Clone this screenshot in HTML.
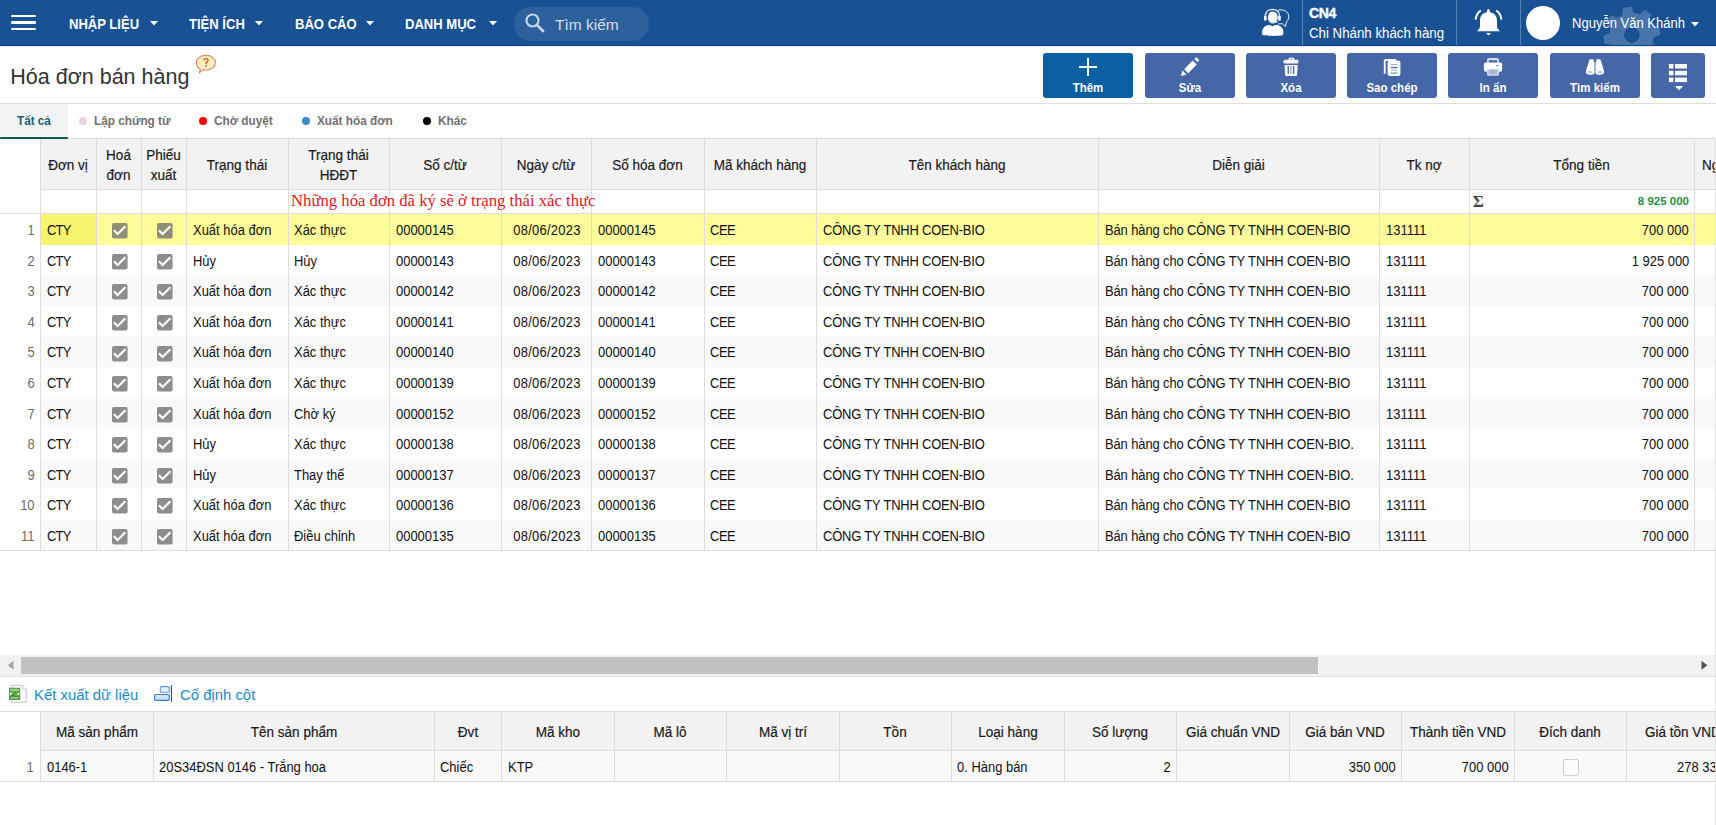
<!DOCTYPE html>
<html><head><meta charset="utf-8"><title>Hóa đơn bán hàng</title>
<style>
html,body{margin:0;padding:0;}
body{width:1716px;height:825px;position:relative;overflow:hidden;background:#fff;font-family:"Liberation Sans", sans-serif;}
.r{position:absolute;}
.t{position:absolute;white-space:nowrap;}
</style></head><body>
<div class="r" style="left:0px;top:0px;width:1716px;height:45px;background:#195294;"></div>
<div class="r" style="left:0px;top:45px;width:1716px;height:1px;background:#0e4585;"></div>
<div class="r" style="left:0px;top:46px;width:1716px;height:1px;background:#ebe9e7;"></div>
<div class="r" style="left:11px;top:15px;width:25px;height:2px;background:#fff;border-radius:1px"></div>
<div class="r" style="left:11px;top:21.25px;width:25px;height:2.5px;background:#fff;border-radius:1px"></div>
<div class="r" style="left:11px;top:28px;width:25px;height:2px;background:#fff;border-radius:1px"></div>
<div class="t" style="left:69px;top:15.71px;font-size:14.5px;line-height:17.4px;font-weight:bold;color:#fff;transform:scaleX(0.9);transform-origin:left 0;">NHẬP LIỆU</div>
<svg class="r" style="left:149.6px;top:21px;" width="8" height="5" viewBox="0 0 8 5"><path d="M0 0 L8 0 L4 4.5 Z" fill="#fff"/></svg>
<div class="t" style="left:188.5px;top:15.71px;font-size:14.5px;line-height:17.4px;font-weight:bold;color:#fff;transform:scaleX(0.9);transform-origin:left 0;">TIỆN ÍCH</div>
<svg class="r" style="left:255px;top:21px;" width="8" height="5" viewBox="0 0 8 5"><path d="M0 0 L8 0 L4 4.5 Z" fill="#fff"/></svg>
<div class="t" style="left:295px;top:15.71px;font-size:14.5px;line-height:17.4px;font-weight:bold;color:#fff;transform:scaleX(0.9);transform-origin:left 0;">BÁO CÁO</div>
<svg class="r" style="left:365.6px;top:21px;" width="8" height="5" viewBox="0 0 8 5"><path d="M0 0 L8 0 L4 4.5 Z" fill="#fff"/></svg>
<div class="t" style="left:405px;top:15.71px;font-size:14.5px;line-height:17.4px;font-weight:bold;color:#fff;transform:scaleX(0.9);transform-origin:left 0;">DANH MỤC</div>
<svg class="r" style="left:489px;top:21px;" width="8" height="5" viewBox="0 0 8 5"><path d="M0 0 L8 0 L4 4.5 Z" fill="#fff"/></svg>
<div class="r" style="left:514px;top:7px;width:135px;height:34px;background:rgba(255,255,255,0.09);border-radius:17px"></div>
<svg class="r" style="left:524px;top:12px;" width="22" height="22" viewBox="0 0 22 22"><circle cx="8.5" cy="8.5" r="6" stroke="#c9d6e6" stroke-width="2.2" fill="none"/><path d="M13 13 L19 19" stroke="#c9d6e6" stroke-width="2.8" stroke-linecap="round"/></svg>
<div class="t" style="left:555px;top:15.98px;font-size:15.5px;line-height:18.6px;font-weight:normal;color:#d5dfeb;">Tìm kiếm</div>
<svg class="r" style="left:1255px;top:2px;" width="40" height="40" viewBox="0 0 40 40">
<path d="M7.5 33 C6.5 30 7 25.5 11.5 23.5 C13.5 22.8 15.5 23 17.5 24.5 C19.5 23 21.5 22.8 24 23.5 C28.5 25.5 29 30 28 33 C25 34.2 10.5 34.2 7.5 33 Z" fill="#fff"/>
<ellipse cx="17.8" cy="15.5" rx="4.9" ry="6" fill="#fff"/>
<path d="M10.3 15 C10.3 9.5 13.5 7.4 17.6 7.4 C21.8 7.4 24.6 9.5 24.6 15" stroke="#dfe7f1" stroke-width="1.4" fill="none"/>
<rect x="9" y="13.8" width="2.6" height="5" rx="1.2" fill="#fff"/>
<rect x="23.2" y="13.8" width="2.6" height="5" rx="1.2" fill="#fff"/>
<path d="M16.8 20.3 C19 20.8 21 20.6 23 19.5" stroke="#cfdbe9" stroke-width="1.2" fill="none"/>
<path d="M22.5 8.5 C27 6.5 34 9 33.8 15 C33.7 18 31.5 19.5 31.2 21 L30.5 24.6 L27.5 21.8 C26 21.5 24.5 21.8 23 22" stroke="#e8eef5" stroke-width="1" fill="none"/>
</svg>
<div class="r" style="left:1302px;top:0px;width:1px;height:45px;background:rgba(255,255,255,0.28);"></div>
<div class="t" style="left:1309px;top:5.17px;font-size:14px;line-height:16.8px;font-weight:900;color:#fff;letter-spacing:-0.3px;-webkit-text-stroke:0.4px #fff;">CN4</div>
<div class="t" style="left:1309px;top:25.17px;font-size:14px;line-height:16.8px;font-weight:normal;color:#fff;transform:scaleX(0.948);transform-origin:left 0;">Chi Nhánh khách hàng</div>
<div class="r" style="left:1456px;top:0px;width:1px;height:45px;background:rgba(255,255,255,0.28);"></div>
<svg class="r" style="left:1468px;top:2px;" width="40" height="40" viewBox="0 0 40 40">
<path d="M20.4 7 C21.3 7 21.8 8.2 22 10.3 C27 11.2 29 14.5 29 19 L29 25.5 L31.8 29.2 L9.2 29.2 L12 25.5 L12 19 C12 14.5 14 11.2 18.8 10.3 C19 8.2 19.5 7 20.4 7 Z" fill="#fff"/>
<path d="M18 31 L23 31 L20.5 33.6 Z" fill="#fff"/>
<path d="M12.8 8.5 C9.8 10.5 8 13.8 7.6 17.6" stroke="#fff" stroke-width="2" fill="none"/>
<path d="M28.2 8.5 C31.2 10.5 33 13.8 33.4 17.6" stroke="#fff" stroke-width="2" fill="none"/>
</svg>
<div class="r" style="left:1520px;top:0px;width:1px;height:45px;background:rgba(255,255,255,0.28);"></div>
<svg class="r" style="left:1590px;top:0px;" width="90" height="45" viewBox="0 0 90 45"><path d="M62.17 26.02 L68.95 26.12 L70.39 34.55 L64.03 36.90 L62.62 43.08 L67.35 47.95 L62.41 54.93 L56.25 52.09 L50.88 55.47 L50.78 62.25 L42.35 63.69 L40.00 57.33 L33.82 55.92 L28.95 60.65 L21.97 55.71 L24.81 49.55 L21.43 44.18 L14.65 44.08 L13.21 35.65 L19.57 33.30 L20.98 27.12 L16.25 22.25 L21.19 15.27 L27.35 18.11 L32.72 14.73 L32.82 7.95 L41.25 6.51 L43.60 12.87 L49.78 14.28 L54.65 9.55 L61.63 14.49 L58.79 20.65 Z M49.599999999999994 35.1 A7.8 7.8 0 1 0 34.0 35.1 A7.8 7.8 0 1 0 49.599999999999994 35.1 Z" fill="rgba(255,255,255,0.2)" fill-rule="evenodd"/></svg>
<div class="r" style="left:1526px;top:5.5px;width:34px;height:34px;border-radius:50%;background:#fff"></div>
<div class="t" style="left:1571.5px;top:15.17px;font-size:14px;line-height:16.8px;font-weight:normal;color:#fff;transform:scaleX(0.93);transform-origin:left 0;">Nguyễn Văn Khánh</div>
<svg class="r" style="left:1691px;top:21.5px;" width="8" height="5" viewBox="0 0 8 5"><path d="M0 0 L8 0 L4 4.5 Z" fill="#fff"/></svg>
<div class="t" style="left:10.3px;top:64.99px;font-size:21.5px;line-height:25.8px;font-weight:normal;color:#333;">Hóa đơn bán hàng</div>
<svg class="r" style="left:190px;top:50px;" width="32" height="28" viewBox="0 0 32 28">
<defs><linearGradient id="hg" x1="0" y1="0" x2="0" y2="1"><stop offset="0" stop-color="#ffe9a8"/><stop offset="1" stop-color="#fff6cf"/></linearGradient></defs>
<path d="M15.9 5.2 C21.3 5.2 25.4 8.5 25.4 12.6 C25.4 16.8 21.3 20 15.9 20 C14.8 20 13.8 19.9 12.9 19.6 L9.6 22.6 L10.2 18.9 C7.8 17.6 6.4 15.3 6.4 12.6 C6.4 8.5 10.5 5.2 15.9 5.2 Z" fill="url(#hg)" stroke="#e2825e" stroke-width="1.1"/>
<path d="M13.3 10.3 C13.3 8.6 14.5 7.9 16 7.9 C17.6 7.9 18.7 8.8 18.7 10.2 C18.7 12 16.6 12.2 16.6 14.2 L15.3 14.2 C15.2 11.6 17.2 11.4 17.2 10.3 C17.2 9.6 16.7 9.2 16 9.2 C15.2 9.2 14.8 9.7 14.8 10.4 Z" fill="#dc5b3a"/>
<rect x="15.2" y="15.3" width="1.6" height="1.6" fill="#dc5b3a"/>
</svg>
<div class="r" style="left:1043px;top:53px;width:90px;height:45px;background:#0b5fa3;border-radius:3px"></div>
<div class="t" style="left:1043.0px;width:90px;text-align:center;top:80.97px;font-size:12.5px;line-height:15.0px;font-weight:bold;color:#fff;transform:scaleX(0.92);transform-origin:center 0;">Thêm</div>
<div class="r" style="left:1145px;top:53px;width:90px;height:45px;background:#4667a7;border-radius:3px"></div>
<div class="t" style="left:1145.0px;width:90px;text-align:center;top:80.97px;font-size:12.5px;line-height:15.0px;font-weight:bold;color:#fff;transform:scaleX(0.92);transform-origin:center 0;">Sửa</div>
<div class="r" style="left:1246px;top:53px;width:90px;height:45px;background:#4667a7;border-radius:3px"></div>
<div class="t" style="left:1246.0px;width:90px;text-align:center;top:80.97px;font-size:12.5px;line-height:15.0px;font-weight:bold;color:#fff;transform:scaleX(0.92);transform-origin:center 0;">Xóa</div>
<div class="r" style="left:1347px;top:53px;width:90px;height:45px;background:#4667a7;border-radius:3px"></div>
<div class="t" style="left:1347.0px;width:90px;text-align:center;top:80.97px;font-size:12.5px;line-height:15.0px;font-weight:bold;color:#fff;transform:scaleX(0.92);transform-origin:center 0;">Sao chép</div>
<div class="r" style="left:1448px;top:53px;width:90px;height:45px;background:#4667a7;border-radius:3px"></div>
<div class="t" style="left:1448.0px;width:90px;text-align:center;top:80.97px;font-size:12.5px;line-height:15.0px;font-weight:bold;color:#fff;transform:scaleX(0.92);transform-origin:center 0;">In ấn</div>
<div class="r" style="left:1550px;top:53px;width:90px;height:45px;background:#4667a7;border-radius:3px"></div>
<div class="t" style="left:1550.0px;width:90px;text-align:center;top:80.97px;font-size:12.5px;line-height:15.0px;font-weight:bold;color:#fff;transform:scaleX(0.92);transform-origin:center 0;">Tìm kiếm</div>
<div class="r" style="left:1651px;top:53px;width:54px;height:45px;background:#4667a7;border-radius:3px"></div>
<div class="r" style="left:1087px;top:58.2px;width:2.2px;height:18px;background:#fff;"></div>
<div class="r" style="left:1079px;top:66.1px;width:18px;height:2.2px;background:#fff;"></div>
<svg class="r" style="left:1170px;top:52px;" width="40" height="30" viewBox="0 0 40 30">
<path d="M11 24 L12.4 18.6 L16.6 22.6 Z" fill="#fff"/>
<path d="M14.2 17.2 L22.6 8.6 L26.8 12.6 L18.2 21.2 Z" fill="#fff"/>
<path d="M24.2 7 L25.6 5.8 C26.2 5.4 26.8 5.4 27.3 5.9 L28.8 7.4 C29.2 7.9 29.2 8.5 28.7 9 L27.6 10.2 Z" fill="#fff"/>
</svg>
<svg class="r" style="left:1271px;top:52px;" width="40" height="30" viewBox="0 0 40 30">
<path d="M17.6 7.9 L17.6 6.8 C17.6 6.2 18 5.8 18.7 5.8 L22.2 5.8 C22.9 5.8 23.3 6.2 23.3 6.8 L23.3 7.9 L21.9 7.9 L21.9 7.2 L19 7.2 L19 7.9 Z" fill="#fff"/>
<rect x="12.4" y="7.8" width="15.1" height="3.8" rx="1.6" fill="#fff"/>
<path d="M13.6 12.9 L26.7 12.9 L26 23 C26 23.6 25.5 24 25 24 L15.2 24 C14.7 24 14.3 23.6 14.2 23 Z" fill="#fff"/>
<rect x="16.6" y="13.9" width="1.3" height="8" fill="#4667a7"/>
<rect x="19.3" y="13.9" width="1.3" height="8" fill="#8fa4cb"/>
<rect x="22" y="13.9" width="1.3" height="8" fill="#4667a7"/>
</svg>
<svg class="r" style="left:1372px;top:52px;" width="40" height="30" viewBox="0 0 40 30">
<path d="M24 7 L14 7 C12.6 7 11.8 7.8 11.8 9.2 L11.8 21.8 L13.6 21.8 L13.6 9.4 C13.6 8.9 14 8.7 14.4 8.7 L24.2 8.7 Z" fill="#fff"/>
<rect x="15.6" y="8.6" width="12.8" height="15.4" rx="2.2" fill="#fff"/>
<rect x="18.9" y="12" width="6.6" height="1.2" fill="#9fb1d3"/>
<rect x="18.9" y="15" width="6.6" height="1.2" fill="#4667a7"/>
<rect x="18.9" y="17.6" width="6.6" height="1.2" fill="#a9b9d8"/>
<rect x="18.9" y="20.6" width="6.6" height="1.2" fill="#6a84b8"/>
</svg>
<svg class="r" style="left:1473px;top:52px;" width="40" height="30" viewBox="0 0 40 30">
<path d="M14 10.8 L14 8 C14 6.8 14.8 6 16 6 L24 6 C25.2 6 26 6.8 26 8 L26 10.8 L24.2 10.8 L24.2 8.2 L15.8 8.2 L15.8 10.8 Z" fill="#d5ddec"/>
<rect x="10.9" y="10.5" width="18.2" height="9.3" rx="1.8" fill="#fff"/>
<ellipse cx="24.3" cy="13.6" rx="1.2" ry="0.6" fill="#4667a7"/>
<path d="M14 17.2 L26 17.2 L26 22.2 C26 23.2 25.4 23.8 24.4 23.8 L15.6 23.8 C14.6 23.8 14 23.2 14 22.2 Z" fill="#c9d3e7"/>
<rect x="15.9" y="17.6" width="8.2" height="4.4" fill="#a8b8d8"/>
</svg>
<svg class="r" style="left:1575px;top:52px;" width="40" height="30" viewBox="0 0 40 30">
<path d="M14.5 7.6 C15.5 7.2 17.5 7.2 18.6 7.6 L19.6 19 L19.6 21 C18.8 22.5 17 22.8 15 22.8 C12.5 22.8 10.8 21.5 10.9 19.8 C11 18.8 11.4 17.5 12 15.5 Z" fill="#fff"/>
<path d="M25.5 7.6 C24.5 7.2 22.5 7.2 21.4 7.6 L20.4 19 L20.4 21 C21.2 22.5 23 22.8 25 22.8 C27.5 22.8 29.2 21.5 29.1 19.8 C29 18.8 28.6 17.5 28 15.5 Z" fill="#fff"/>
<rect x="19.4" y="10" width="1.2" height="7" fill="#d3dcec"/>
<ellipse cx="15" cy="20.2" rx="2.6" ry="1.1" fill="#b9c7e0"/>
<ellipse cx="25" cy="20.2" rx="2.6" ry="1.1" fill="#b9c7e0"/>
</svg>
<svg class="r" style="left:1658px;top:52px;" width="40" height="46" viewBox="0 0 40 46">
<rect x="10.9" y="12" width="4.5" height="4.5" fill="#fff"/><rect x="17" y="12" width="12" height="4.5" fill="#fff"/>
<rect x="10.9" y="18.8" width="4.5" height="4.5" fill="#fff"/><rect x="17" y="18.8" width="12" height="4.5" fill="#fff"/>
<rect x="10.9" y="25.6" width="4.5" height="4.5" fill="#fff"/><rect x="17" y="25.6" width="12" height="4.5" fill="#fff"/>
<path d="M17 34 L25 34 L21 38.3 Z" fill="#fff"/>
</svg>
<div class="r" style="left:0px;top:103px;width:1716px;height:1px;background:#dddddd;"></div>
<div class="r" style="left:0px;top:104px;width:68px;height:32px;background:#f1f3f5;"></div>
<div class="r" style="left:0px;top:138px;width:1716px;height:1px;background:#dddddd;"></div>
<div class="r" style="left:0px;top:137px;width:68px;height:2px;background:#075b4f;border-radius:1px"></div>
<div class="t" style="left:16.7px;top:113.40px;font-size:13px;line-height:15.6px;font-weight:bold;color:#1d6070;transform:scaleX(0.9);transform-origin:left 0;">Tất cả</div>
<div class="r" style="left:79px;top:117.3px;width:8.2px;height:8.2px;border-radius:50%;background:#ead3df"></div>
<div class="t" style="left:94px;top:113.40px;font-size:13px;line-height:15.6px;font-weight:bold;color:#707070;transform:scaleX(0.905);transform-origin:left 0;">Lập chứng từ</div>
<div class="r" style="left:199px;top:117.3px;width:8.2px;height:8.2px;border-radius:50%;background:#ff0000"></div>
<div class="t" style="left:214px;top:113.40px;font-size:13px;line-height:15.6px;font-weight:bold;color:#707070;transform:scaleX(0.905);transform-origin:left 0;">Chờ duyệt</div>
<div class="r" style="left:301.7px;top:117.3px;width:8.2px;height:8.2px;border-radius:50%;background:#3d87cb"></div>
<div class="t" style="left:316.7px;top:113.40px;font-size:13px;line-height:15.6px;font-weight:bold;color:#707070;transform:scaleX(0.905);transform-origin:left 0;">Xuất hóa đơn</div>
<div class="r" style="left:423px;top:117.3px;width:8.2px;height:8.2px;border-radius:50%;background:#000"></div>
<div class="t" style="left:438px;top:113.40px;font-size:13px;line-height:15.6px;font-weight:bold;color:#707070;transform:scaleX(0.905);transform-origin:left 0;">Khác</div>
<div class="r" style="left:41px;top:139px;width:1674px;height:50px;background:#f2f2f2;"></div>
<div class="r" style="left:41px;top:214px;width:1674px;height:31px;background:#fefc9a;"></div>
<div class="r" style="left:41px;top:214px;width:55px;height:31px;background:#f7f56e;"></div>
<div class="r" style="left:41px;top:275px;width:1674px;height:31px;background:#f9f9f9;"></div>
<div class="r" style="left:41px;top:336px;width:1674px;height:31px;background:#f9f9f9;"></div>
<div class="r" style="left:41px;top:397px;width:1674px;height:31px;background:#f9f9f9;"></div>
<div class="r" style="left:41px;top:459px;width:1674px;height:30px;background:#f9f9f9;"></div>
<div class="r" style="left:41px;top:520px;width:1674px;height:30px;background:#f9f9f9;"></div>
<div class="r" style="left:40px;top:189px;width:1675px;height:1px;background:#dddddd;"></div>
<div class="r" style="left:0px;top:213px;width:1715px;height:1px;background:#dddddd;"></div>
<div class="r" style="left:0px;top:550px;width:1715px;height:1px;background:#dddddd;"></div>
<div class="r" style="left:40px;top:139px;width:1px;height:411px;background:#dddddd;"></div>
<div class="r" style="left:96px;top:139px;width:1px;height:411px;background:#dddddd;"></div>
<div class="r" style="left:141px;top:139px;width:1px;height:411px;background:#dddddd;"></div>
<div class="r" style="left:186px;top:139px;width:1px;height:411px;background:#dddddd;"></div>
<div class="r" style="left:288px;top:139px;width:1px;height:411px;background:#dddddd;"></div>
<div class="r" style="left:389px;top:139px;width:1px;height:411px;background:#dddddd;"></div>
<div class="r" style="left:501px;top:139px;width:1px;height:411px;background:#dddddd;"></div>
<div class="r" style="left:591px;top:139px;width:1px;height:411px;background:#dddddd;"></div>
<div class="r" style="left:704px;top:139px;width:1px;height:411px;background:#dddddd;"></div>
<div class="r" style="left:816px;top:139px;width:1px;height:411px;background:#dddddd;"></div>
<div class="r" style="left:1098px;top:139px;width:1px;height:411px;background:#dddddd;"></div>
<div class="r" style="left:1379px;top:139px;width:1px;height:411px;background:#dddddd;"></div>
<div class="r" style="left:1469px;top:139px;width:1px;height:411px;background:#dddddd;"></div>
<div class="r" style="left:1694px;top:139px;width:1px;height:411px;background:#dddddd;"></div>
<div class="r" style="left:1715px;top:138px;width:1px;height:687px;background:#e2e2e2;"></div>
<div class="t" style="left:20.0px;width:96px;text-align:center;top:156.87px;font-size:14px;line-height:16.8px;font-weight:normal;color:#1a1a1a;transform:scaleX(0.965);transform-origin:center 0;-webkit-text-stroke:0.2px #1a1a1a;">Đơn vị</div>
<div class="t" style="left:76.0px;width:85px;text-align:center;top:147.37px;font-size:14px;line-height:16.8px;font-weight:normal;color:#1a1a1a;transform:scaleX(0.965);transform-origin:center 0;-webkit-text-stroke:0.2px #1a1a1a;">Hoá</div>
<div class="t" style="left:76.0px;width:85px;text-align:center;top:166.77px;font-size:14px;line-height:16.8px;font-weight:normal;color:#1a1a1a;transform:scaleX(0.965);transform-origin:center 0;-webkit-text-stroke:0.2px #1a1a1a;">đơn</div>
<div class="t" style="left:121.0px;width:85px;text-align:center;top:147.37px;font-size:14px;line-height:16.8px;font-weight:normal;color:#1a1a1a;transform:scaleX(0.965);transform-origin:center 0;-webkit-text-stroke:0.2px #1a1a1a;">Phiếu</div>
<div class="t" style="left:121.0px;width:85px;text-align:center;top:166.77px;font-size:14px;line-height:16.8px;font-weight:normal;color:#1a1a1a;transform:scaleX(0.965);transform-origin:center 0;-webkit-text-stroke:0.2px #1a1a1a;">xuất</div>
<div class="t" style="left:166.0px;width:142px;text-align:center;top:156.87px;font-size:14px;line-height:16.8px;font-weight:normal;color:#1a1a1a;transform:scaleX(0.965);transform-origin:center 0;-webkit-text-stroke:0.2px #1a1a1a;">Trạng thái</div>
<div class="t" style="left:268.0px;width:141px;text-align:center;top:147.37px;font-size:14px;line-height:16.8px;font-weight:normal;color:#1a1a1a;transform:scaleX(0.965);transform-origin:center 0;-webkit-text-stroke:0.2px #1a1a1a;">Trạng thái</div>
<div class="t" style="left:268.0px;width:141px;text-align:center;top:166.77px;font-size:14px;line-height:16.8px;font-weight:normal;color:#1a1a1a;transform:scaleX(0.965);transform-origin:center 0;-webkit-text-stroke:0.2px #1a1a1a;">HĐĐT</div>
<div class="t" style="left:369.0px;width:152px;text-align:center;top:156.87px;font-size:14px;line-height:16.8px;font-weight:normal;color:#1a1a1a;transform:scaleX(0.965);transform-origin:center 0;-webkit-text-stroke:0.2px #1a1a1a;">Số c/từ</div>
<div class="t" style="left:481.0px;width:130px;text-align:center;top:156.87px;font-size:14px;line-height:16.8px;font-weight:normal;color:#1a1a1a;transform:scaleX(0.965);transform-origin:center 0;-webkit-text-stroke:0.2px #1a1a1a;">Ngày c/từ</div>
<div class="t" style="left:571.0px;width:153px;text-align:center;top:156.87px;font-size:14px;line-height:16.8px;font-weight:normal;color:#1a1a1a;transform:scaleX(0.965);transform-origin:center 0;-webkit-text-stroke:0.2px #1a1a1a;">Số hóa đơn</div>
<div class="t" style="left:684.0px;width:152px;text-align:center;top:156.87px;font-size:14px;line-height:16.8px;font-weight:normal;color:#1a1a1a;transform:scaleX(0.965);transform-origin:center 0;-webkit-text-stroke:0.2px #1a1a1a;">Mã khách hàng</div>
<div class="t" style="left:796.0px;width:322px;text-align:center;top:156.87px;font-size:14px;line-height:16.8px;font-weight:normal;color:#1a1a1a;transform:scaleX(0.965);transform-origin:center 0;-webkit-text-stroke:0.2px #1a1a1a;">Tên khách hàng</div>
<div class="t" style="left:1078.0px;width:321px;text-align:center;top:156.87px;font-size:14px;line-height:16.8px;font-weight:normal;color:#1a1a1a;transform:scaleX(0.965);transform-origin:center 0;-webkit-text-stroke:0.2px #1a1a1a;">Diễn giải</div>
<div class="t" style="left:1359.0px;width:130px;text-align:center;top:156.87px;font-size:14px;line-height:16.8px;font-weight:normal;color:#1a1a1a;transform:scaleX(0.965);transform-origin:center 0;-webkit-text-stroke:0.2px #1a1a1a;">Tk nợ</div>
<div class="t" style="left:1449.0px;width:265px;text-align:center;top:156.87px;font-size:14px;line-height:16.8px;font-weight:normal;color:#1a1a1a;transform:scaleX(0.965);transform-origin:center 0;-webkit-text-stroke:0.2px #1a1a1a;">Tổng tiền</div>
<div class="r" style="left:1695px;top:139px;width:20px;height:50px;overflow:hidden">
<div class="t" style="left:7px;top:17.87px;font-size:14px;line-height:16.8px;font-weight:normal;color:#1a1a1a;transform:scaleX(0.965);transform-origin:left 0;-webkit-text-stroke:0.2px #1a1a1a;">Ngày hóa đơn</div>
</div>
<div class="t" style="left:291px;top:191.16px;font-size:16.7px;line-height:20.04px;font-weight:normal;color:#e3171f;font-family:'Liberation Serif', serif;">Những hóa đơn đã ký sẽ ở trạng thái xác thực</div>
<div class="t" style="left:1472.8px;top:192.48px;font-size:17px;line-height:20.4px;font-weight:bold;color:#444;font-family:'Liberation Serif', serif;">Σ</div>
<div class="t" style="right:27px;top:195.10px;font-size:11.5px;line-height:13.8px;font-weight:bold;color:#2a8f44;text-align:right;">8 925 000</div>
<div class="t" style="right:1681.5px;top:222.17px;font-size:14px;line-height:16.8px;font-weight:normal;color:#6b6b6b;text-align:right;transform:scaleX(0.925);transform-origin:right 0;">1</div>
<div class="t" style="left:47px;top:222.17px;font-size:14px;line-height:16.8px;font-weight:normal;color:#111;transform:scaleX(0.925);transform-origin:left 0;letter-spacing:-0.8px">CTY</div>
<svg class="r" style="left:111.8px;top:223.2px" width="16" height="16" viewBox="0 0 16 16"><rect x="0" y="0" width="15.6" height="15.6" rx="2" fill="#8f8f76"/><path d="M1.9 7.3 L5.6 11 L13.4 3.3" stroke="#fff" stroke-width="2.1" fill="none"/></svg>
<svg class="r" style="left:156.8px;top:223.2px" width="16" height="16" viewBox="0 0 16 16"><rect x="0" y="0" width="15.6" height="15.6" rx="2" fill="#8f8f76"/><path d="M1.9 7.3 L5.6 11 L13.4 3.3" stroke="#fff" stroke-width="2.1" fill="none"/></svg>
<div class="t" style="left:193.3px;top:222.17px;font-size:14px;line-height:16.8px;font-weight:normal;color:#111;transform:scaleX(0.925);transform-origin:left 0;">Xuất hóa đơn</div>
<div class="t" style="left:294.3px;top:222.17px;font-size:14px;line-height:16.8px;font-weight:normal;color:#111;transform:scaleX(0.925);transform-origin:left 0;">Xác thực</div>
<div class="t" style="left:395.8px;top:222.17px;font-size:14px;line-height:16.8px;font-weight:normal;color:#111;transform:scaleX(0.925);transform-origin:left 0;">00000145</div>
<div class="t" style="left:501.5px;width:90px;text-align:center;top:222.17px;font-size:14px;line-height:16.8px;font-weight:normal;color:#111;transform:scaleX(0.925);transform-origin:center 0;letter-spacing:0.3px">08/06/2023</div>
<div class="t" style="left:598.3px;top:222.17px;font-size:14px;line-height:16.8px;font-weight:normal;color:#111;transform:scaleX(0.925);transform-origin:left 0;">00000145</div>
<div class="t" style="left:710.3px;top:222.17px;font-size:14px;line-height:16.8px;font-weight:normal;color:#111;transform:scaleX(0.925);transform-origin:left 0;letter-spacing:-0.5px">CEE</div>
<div class="t" style="left:822.8px;top:222.17px;font-size:14px;line-height:16.8px;font-weight:normal;color:#111;transform:scaleX(0.925);transform-origin:left 0;letter-spacing:-0.2px">CÔNG TY TNHH COEN-BIO</div>
<div class="t" style="left:1104.8px;top:222.17px;font-size:14px;line-height:16.8px;font-weight:normal;color:#111;transform:scaleX(0.925);transform-origin:left 0;letter-spacing:-0.12px">Bán hàng cho CÔNG TY TNHH COEN-BIO</div>
<div class="t" style="left:1385.8px;top:222.17px;font-size:14px;line-height:16.8px;font-weight:normal;color:#111;transform:scaleX(0.925);transform-origin:left 0;">131111</div>
<div class="t" style="right:27px;top:222.17px;font-size:14px;line-height:16.8px;font-weight:normal;color:#111;text-align:right;transform:scaleX(0.925);transform-origin:right 0;">700 000</div>
<div class="t" style="right:1681.5px;top:252.75px;font-size:14px;line-height:16.8px;font-weight:normal;color:#6b6b6b;text-align:right;transform:scaleX(0.925);transform-origin:right 0;">2</div>
<div class="t" style="left:47px;top:252.75px;font-size:14px;line-height:16.8px;font-weight:normal;color:#111;transform:scaleX(0.925);transform-origin:left 0;letter-spacing:-0.8px">CTY</div>
<svg class="r" style="left:111.8px;top:253.77999999999997px" width="16" height="16" viewBox="0 0 16 16"><rect x="0" y="0" width="15.6" height="15.6" rx="2" fill="#8d8d8d"/><path d="M1.9 7.3 L5.6 11 L13.4 3.3" stroke="#fff" stroke-width="2.1" fill="none"/></svg>
<svg class="r" style="left:156.8px;top:253.77999999999997px" width="16" height="16" viewBox="0 0 16 16"><rect x="0" y="0" width="15.6" height="15.6" rx="2" fill="#8d8d8d"/><path d="M1.9 7.3 L5.6 11 L13.4 3.3" stroke="#fff" stroke-width="2.1" fill="none"/></svg>
<div class="t" style="left:193.3px;top:252.75px;font-size:14px;line-height:16.8px;font-weight:normal;color:#111;transform:scaleX(0.925);transform-origin:left 0;">Hủy</div>
<div class="t" style="left:294.3px;top:252.75px;font-size:14px;line-height:16.8px;font-weight:normal;color:#111;transform:scaleX(0.925);transform-origin:left 0;">Hủy</div>
<div class="t" style="left:395.8px;top:252.75px;font-size:14px;line-height:16.8px;font-weight:normal;color:#111;transform:scaleX(0.925);transform-origin:left 0;">00000143</div>
<div class="t" style="left:501.5px;width:90px;text-align:center;top:252.75px;font-size:14px;line-height:16.8px;font-weight:normal;color:#111;transform:scaleX(0.925);transform-origin:center 0;letter-spacing:0.3px">08/06/2023</div>
<div class="t" style="left:598.3px;top:252.75px;font-size:14px;line-height:16.8px;font-weight:normal;color:#111;transform:scaleX(0.925);transform-origin:left 0;">00000143</div>
<div class="t" style="left:710.3px;top:252.75px;font-size:14px;line-height:16.8px;font-weight:normal;color:#111;transform:scaleX(0.925);transform-origin:left 0;letter-spacing:-0.5px">CEE</div>
<div class="t" style="left:822.8px;top:252.75px;font-size:14px;line-height:16.8px;font-weight:normal;color:#111;transform:scaleX(0.925);transform-origin:left 0;letter-spacing:-0.2px">CÔNG TY TNHH COEN-BIO</div>
<div class="t" style="left:1104.8px;top:252.75px;font-size:14px;line-height:16.8px;font-weight:normal;color:#111;transform:scaleX(0.925);transform-origin:left 0;letter-spacing:-0.12px">Bán hàng cho CÔNG TY TNHH COEN-BIO</div>
<div class="t" style="left:1385.8px;top:252.75px;font-size:14px;line-height:16.8px;font-weight:normal;color:#111;transform:scaleX(0.925);transform-origin:left 0;">131111</div>
<div class="t" style="right:27px;top:252.75px;font-size:14px;line-height:16.8px;font-weight:normal;color:#111;text-align:right;transform:scaleX(0.925);transform-origin:right 0;">1 925 000</div>
<div class="t" style="right:1681.5px;top:283.33px;font-size:14px;line-height:16.8px;font-weight:normal;color:#6b6b6b;text-align:right;transform:scaleX(0.925);transform-origin:right 0;">3</div>
<div class="t" style="left:47px;top:283.33px;font-size:14px;line-height:16.8px;font-weight:normal;color:#111;transform:scaleX(0.925);transform-origin:left 0;letter-spacing:-0.8px">CTY</div>
<svg class="r" style="left:111.8px;top:284.35999999999996px" width="16" height="16" viewBox="0 0 16 16"><rect x="0" y="0" width="15.6" height="15.6" rx="2" fill="#8d8d8d"/><path d="M1.9 7.3 L5.6 11 L13.4 3.3" stroke="#fff" stroke-width="2.1" fill="none"/></svg>
<svg class="r" style="left:156.8px;top:284.35999999999996px" width="16" height="16" viewBox="0 0 16 16"><rect x="0" y="0" width="15.6" height="15.6" rx="2" fill="#8d8d8d"/><path d="M1.9 7.3 L5.6 11 L13.4 3.3" stroke="#fff" stroke-width="2.1" fill="none"/></svg>
<div class="t" style="left:193.3px;top:283.33px;font-size:14px;line-height:16.8px;font-weight:normal;color:#111;transform:scaleX(0.925);transform-origin:left 0;">Xuất hóa đơn</div>
<div class="t" style="left:294.3px;top:283.33px;font-size:14px;line-height:16.8px;font-weight:normal;color:#111;transform:scaleX(0.925);transform-origin:left 0;">Xác thực</div>
<div class="t" style="left:395.8px;top:283.33px;font-size:14px;line-height:16.8px;font-weight:normal;color:#111;transform:scaleX(0.925);transform-origin:left 0;">00000142</div>
<div class="t" style="left:501.5px;width:90px;text-align:center;top:283.33px;font-size:14px;line-height:16.8px;font-weight:normal;color:#111;transform:scaleX(0.925);transform-origin:center 0;letter-spacing:0.3px">08/06/2023</div>
<div class="t" style="left:598.3px;top:283.33px;font-size:14px;line-height:16.8px;font-weight:normal;color:#111;transform:scaleX(0.925);transform-origin:left 0;">00000142</div>
<div class="t" style="left:710.3px;top:283.33px;font-size:14px;line-height:16.8px;font-weight:normal;color:#111;transform:scaleX(0.925);transform-origin:left 0;letter-spacing:-0.5px">CEE</div>
<div class="t" style="left:822.8px;top:283.33px;font-size:14px;line-height:16.8px;font-weight:normal;color:#111;transform:scaleX(0.925);transform-origin:left 0;letter-spacing:-0.2px">CÔNG TY TNHH COEN-BIO</div>
<div class="t" style="left:1104.8px;top:283.33px;font-size:14px;line-height:16.8px;font-weight:normal;color:#111;transform:scaleX(0.925);transform-origin:left 0;letter-spacing:-0.12px">Bán hàng cho CÔNG TY TNHH COEN-BIO</div>
<div class="t" style="left:1385.8px;top:283.33px;font-size:14px;line-height:16.8px;font-weight:normal;color:#111;transform:scaleX(0.925);transform-origin:left 0;">131111</div>
<div class="t" style="right:27px;top:283.33px;font-size:14px;line-height:16.8px;font-weight:normal;color:#111;text-align:right;transform:scaleX(0.925);transform-origin:right 0;">700 000</div>
<div class="t" style="right:1681.5px;top:313.91px;font-size:14px;line-height:16.8px;font-weight:normal;color:#6b6b6b;text-align:right;transform:scaleX(0.925);transform-origin:right 0;">4</div>
<div class="t" style="left:47px;top:313.91px;font-size:14px;line-height:16.8px;font-weight:normal;color:#111;transform:scaleX(0.925);transform-origin:left 0;letter-spacing:-0.8px">CTY</div>
<svg class="r" style="left:111.8px;top:314.94px" width="16" height="16" viewBox="0 0 16 16"><rect x="0" y="0" width="15.6" height="15.6" rx="2" fill="#8d8d8d"/><path d="M1.9 7.3 L5.6 11 L13.4 3.3" stroke="#fff" stroke-width="2.1" fill="none"/></svg>
<svg class="r" style="left:156.8px;top:314.94px" width="16" height="16" viewBox="0 0 16 16"><rect x="0" y="0" width="15.6" height="15.6" rx="2" fill="#8d8d8d"/><path d="M1.9 7.3 L5.6 11 L13.4 3.3" stroke="#fff" stroke-width="2.1" fill="none"/></svg>
<div class="t" style="left:193.3px;top:313.91px;font-size:14px;line-height:16.8px;font-weight:normal;color:#111;transform:scaleX(0.925);transform-origin:left 0;">Xuất hóa đơn</div>
<div class="t" style="left:294.3px;top:313.91px;font-size:14px;line-height:16.8px;font-weight:normal;color:#111;transform:scaleX(0.925);transform-origin:left 0;">Xác thực</div>
<div class="t" style="left:395.8px;top:313.91px;font-size:14px;line-height:16.8px;font-weight:normal;color:#111;transform:scaleX(0.925);transform-origin:left 0;">00000141</div>
<div class="t" style="left:501.5px;width:90px;text-align:center;top:313.91px;font-size:14px;line-height:16.8px;font-weight:normal;color:#111;transform:scaleX(0.925);transform-origin:center 0;letter-spacing:0.3px">08/06/2023</div>
<div class="t" style="left:598.3px;top:313.91px;font-size:14px;line-height:16.8px;font-weight:normal;color:#111;transform:scaleX(0.925);transform-origin:left 0;">00000141</div>
<div class="t" style="left:710.3px;top:313.91px;font-size:14px;line-height:16.8px;font-weight:normal;color:#111;transform:scaleX(0.925);transform-origin:left 0;letter-spacing:-0.5px">CEE</div>
<div class="t" style="left:822.8px;top:313.91px;font-size:14px;line-height:16.8px;font-weight:normal;color:#111;transform:scaleX(0.925);transform-origin:left 0;letter-spacing:-0.2px">CÔNG TY TNHH COEN-BIO</div>
<div class="t" style="left:1104.8px;top:313.91px;font-size:14px;line-height:16.8px;font-weight:normal;color:#111;transform:scaleX(0.925);transform-origin:left 0;letter-spacing:-0.12px">Bán hàng cho CÔNG TY TNHH COEN-BIO</div>
<div class="t" style="left:1385.8px;top:313.91px;font-size:14px;line-height:16.8px;font-weight:normal;color:#111;transform:scaleX(0.925);transform-origin:left 0;">131111</div>
<div class="t" style="right:27px;top:313.91px;font-size:14px;line-height:16.8px;font-weight:normal;color:#111;text-align:right;transform:scaleX(0.925);transform-origin:right 0;">700 000</div>
<div class="t" style="right:1681.5px;top:344.49px;font-size:14px;line-height:16.8px;font-weight:normal;color:#6b6b6b;text-align:right;transform:scaleX(0.925);transform-origin:right 0;">5</div>
<div class="t" style="left:47px;top:344.49px;font-size:14px;line-height:16.8px;font-weight:normal;color:#111;transform:scaleX(0.925);transform-origin:left 0;letter-spacing:-0.8px">CTY</div>
<svg class="r" style="left:111.8px;top:345.52px" width="16" height="16" viewBox="0 0 16 16"><rect x="0" y="0" width="15.6" height="15.6" rx="2" fill="#8d8d8d"/><path d="M1.9 7.3 L5.6 11 L13.4 3.3" stroke="#fff" stroke-width="2.1" fill="none"/></svg>
<svg class="r" style="left:156.8px;top:345.52px" width="16" height="16" viewBox="0 0 16 16"><rect x="0" y="0" width="15.6" height="15.6" rx="2" fill="#8d8d8d"/><path d="M1.9 7.3 L5.6 11 L13.4 3.3" stroke="#fff" stroke-width="2.1" fill="none"/></svg>
<div class="t" style="left:193.3px;top:344.49px;font-size:14px;line-height:16.8px;font-weight:normal;color:#111;transform:scaleX(0.925);transform-origin:left 0;">Xuất hóa đơn</div>
<div class="t" style="left:294.3px;top:344.49px;font-size:14px;line-height:16.8px;font-weight:normal;color:#111;transform:scaleX(0.925);transform-origin:left 0;">Xác thực</div>
<div class="t" style="left:395.8px;top:344.49px;font-size:14px;line-height:16.8px;font-weight:normal;color:#111;transform:scaleX(0.925);transform-origin:left 0;">00000140</div>
<div class="t" style="left:501.5px;width:90px;text-align:center;top:344.49px;font-size:14px;line-height:16.8px;font-weight:normal;color:#111;transform:scaleX(0.925);transform-origin:center 0;letter-spacing:0.3px">08/06/2023</div>
<div class="t" style="left:598.3px;top:344.49px;font-size:14px;line-height:16.8px;font-weight:normal;color:#111;transform:scaleX(0.925);transform-origin:left 0;">00000140</div>
<div class="t" style="left:710.3px;top:344.49px;font-size:14px;line-height:16.8px;font-weight:normal;color:#111;transform:scaleX(0.925);transform-origin:left 0;letter-spacing:-0.5px">CEE</div>
<div class="t" style="left:822.8px;top:344.49px;font-size:14px;line-height:16.8px;font-weight:normal;color:#111;transform:scaleX(0.925);transform-origin:left 0;letter-spacing:-0.2px">CÔNG TY TNHH COEN-BIO</div>
<div class="t" style="left:1104.8px;top:344.49px;font-size:14px;line-height:16.8px;font-weight:normal;color:#111;transform:scaleX(0.925);transform-origin:left 0;letter-spacing:-0.12px">Bán hàng cho CÔNG TY TNHH COEN-BIO</div>
<div class="t" style="left:1385.8px;top:344.49px;font-size:14px;line-height:16.8px;font-weight:normal;color:#111;transform:scaleX(0.925);transform-origin:left 0;">131111</div>
<div class="t" style="right:27px;top:344.49px;font-size:14px;line-height:16.8px;font-weight:normal;color:#111;text-align:right;transform:scaleX(0.925);transform-origin:right 0;">700 000</div>
<div class="t" style="right:1681.5px;top:375.07px;font-size:14px;line-height:16.8px;font-weight:normal;color:#6b6b6b;text-align:right;transform:scaleX(0.925);transform-origin:right 0;">6</div>
<div class="t" style="left:47px;top:375.07px;font-size:14px;line-height:16.8px;font-weight:normal;color:#111;transform:scaleX(0.925);transform-origin:left 0;letter-spacing:-0.8px">CTY</div>
<svg class="r" style="left:111.8px;top:376.09999999999997px" width="16" height="16" viewBox="0 0 16 16"><rect x="0" y="0" width="15.6" height="15.6" rx="2" fill="#8d8d8d"/><path d="M1.9 7.3 L5.6 11 L13.4 3.3" stroke="#fff" stroke-width="2.1" fill="none"/></svg>
<svg class="r" style="left:156.8px;top:376.09999999999997px" width="16" height="16" viewBox="0 0 16 16"><rect x="0" y="0" width="15.6" height="15.6" rx="2" fill="#8d8d8d"/><path d="M1.9 7.3 L5.6 11 L13.4 3.3" stroke="#fff" stroke-width="2.1" fill="none"/></svg>
<div class="t" style="left:193.3px;top:375.07px;font-size:14px;line-height:16.8px;font-weight:normal;color:#111;transform:scaleX(0.925);transform-origin:left 0;">Xuất hóa đơn</div>
<div class="t" style="left:294.3px;top:375.07px;font-size:14px;line-height:16.8px;font-weight:normal;color:#111;transform:scaleX(0.925);transform-origin:left 0;">Xác thực</div>
<div class="t" style="left:395.8px;top:375.07px;font-size:14px;line-height:16.8px;font-weight:normal;color:#111;transform:scaleX(0.925);transform-origin:left 0;">00000139</div>
<div class="t" style="left:501.5px;width:90px;text-align:center;top:375.07px;font-size:14px;line-height:16.8px;font-weight:normal;color:#111;transform:scaleX(0.925);transform-origin:center 0;letter-spacing:0.3px">08/06/2023</div>
<div class="t" style="left:598.3px;top:375.07px;font-size:14px;line-height:16.8px;font-weight:normal;color:#111;transform:scaleX(0.925);transform-origin:left 0;">00000139</div>
<div class="t" style="left:710.3px;top:375.07px;font-size:14px;line-height:16.8px;font-weight:normal;color:#111;transform:scaleX(0.925);transform-origin:left 0;letter-spacing:-0.5px">CEE</div>
<div class="t" style="left:822.8px;top:375.07px;font-size:14px;line-height:16.8px;font-weight:normal;color:#111;transform:scaleX(0.925);transform-origin:left 0;letter-spacing:-0.2px">CÔNG TY TNHH COEN-BIO</div>
<div class="t" style="left:1104.8px;top:375.07px;font-size:14px;line-height:16.8px;font-weight:normal;color:#111;transform:scaleX(0.925);transform-origin:left 0;letter-spacing:-0.12px">Bán hàng cho CÔNG TY TNHH COEN-BIO</div>
<div class="t" style="left:1385.8px;top:375.07px;font-size:14px;line-height:16.8px;font-weight:normal;color:#111;transform:scaleX(0.925);transform-origin:left 0;">131111</div>
<div class="t" style="right:27px;top:375.07px;font-size:14px;line-height:16.8px;font-weight:normal;color:#111;text-align:right;transform:scaleX(0.925);transform-origin:right 0;">700 000</div>
<div class="t" style="right:1681.5px;top:405.65px;font-size:14px;line-height:16.8px;font-weight:normal;color:#6b6b6b;text-align:right;transform:scaleX(0.925);transform-origin:right 0;">7</div>
<div class="t" style="left:47px;top:405.65px;font-size:14px;line-height:16.8px;font-weight:normal;color:#111;transform:scaleX(0.925);transform-origin:left 0;letter-spacing:-0.8px">CTY</div>
<svg class="r" style="left:111.8px;top:406.68px" width="16" height="16" viewBox="0 0 16 16"><rect x="0" y="0" width="15.6" height="15.6" rx="2" fill="#8d8d8d"/><path d="M1.9 7.3 L5.6 11 L13.4 3.3" stroke="#fff" stroke-width="2.1" fill="none"/></svg>
<svg class="r" style="left:156.8px;top:406.68px" width="16" height="16" viewBox="0 0 16 16"><rect x="0" y="0" width="15.6" height="15.6" rx="2" fill="#8d8d8d"/><path d="M1.9 7.3 L5.6 11 L13.4 3.3" stroke="#fff" stroke-width="2.1" fill="none"/></svg>
<div class="t" style="left:193.3px;top:405.65px;font-size:14px;line-height:16.8px;font-weight:normal;color:#111;transform:scaleX(0.925);transform-origin:left 0;">Xuất hóa đơn</div>
<div class="t" style="left:294.3px;top:405.65px;font-size:14px;line-height:16.8px;font-weight:normal;color:#111;transform:scaleX(0.925);transform-origin:left 0;">Chờ ký</div>
<div class="t" style="left:395.8px;top:405.65px;font-size:14px;line-height:16.8px;font-weight:normal;color:#111;transform:scaleX(0.925);transform-origin:left 0;">00000152</div>
<div class="t" style="left:501.5px;width:90px;text-align:center;top:405.65px;font-size:14px;line-height:16.8px;font-weight:normal;color:#111;transform:scaleX(0.925);transform-origin:center 0;letter-spacing:0.3px">08/06/2023</div>
<div class="t" style="left:598.3px;top:405.65px;font-size:14px;line-height:16.8px;font-weight:normal;color:#111;transform:scaleX(0.925);transform-origin:left 0;">00000152</div>
<div class="t" style="left:710.3px;top:405.65px;font-size:14px;line-height:16.8px;font-weight:normal;color:#111;transform:scaleX(0.925);transform-origin:left 0;letter-spacing:-0.5px">CEE</div>
<div class="t" style="left:822.8px;top:405.65px;font-size:14px;line-height:16.8px;font-weight:normal;color:#111;transform:scaleX(0.925);transform-origin:left 0;letter-spacing:-0.2px">CÔNG TY TNHH COEN-BIO</div>
<div class="t" style="left:1104.8px;top:405.65px;font-size:14px;line-height:16.8px;font-weight:normal;color:#111;transform:scaleX(0.925);transform-origin:left 0;letter-spacing:-0.12px">Bán hàng cho CÔNG TY TNHH COEN-BIO</div>
<div class="t" style="left:1385.8px;top:405.65px;font-size:14px;line-height:16.8px;font-weight:normal;color:#111;transform:scaleX(0.925);transform-origin:left 0;">131111</div>
<div class="t" style="right:27px;top:405.65px;font-size:14px;line-height:16.8px;font-weight:normal;color:#111;text-align:right;transform:scaleX(0.925);transform-origin:right 0;">700 000</div>
<div class="t" style="right:1681.5px;top:436.23px;font-size:14px;line-height:16.8px;font-weight:normal;color:#6b6b6b;text-align:right;transform:scaleX(0.925);transform-origin:right 0;">8</div>
<div class="t" style="left:47px;top:436.23px;font-size:14px;line-height:16.8px;font-weight:normal;color:#111;transform:scaleX(0.925);transform-origin:left 0;letter-spacing:-0.8px">CTY</div>
<svg class="r" style="left:111.8px;top:437.26px" width="16" height="16" viewBox="0 0 16 16"><rect x="0" y="0" width="15.6" height="15.6" rx="2" fill="#8d8d8d"/><path d="M1.9 7.3 L5.6 11 L13.4 3.3" stroke="#fff" stroke-width="2.1" fill="none"/></svg>
<svg class="r" style="left:156.8px;top:437.26px" width="16" height="16" viewBox="0 0 16 16"><rect x="0" y="0" width="15.6" height="15.6" rx="2" fill="#8d8d8d"/><path d="M1.9 7.3 L5.6 11 L13.4 3.3" stroke="#fff" stroke-width="2.1" fill="none"/></svg>
<div class="t" style="left:193.3px;top:436.23px;font-size:14px;line-height:16.8px;font-weight:normal;color:#111;transform:scaleX(0.925);transform-origin:left 0;">Hủy</div>
<div class="t" style="left:294.3px;top:436.23px;font-size:14px;line-height:16.8px;font-weight:normal;color:#111;transform:scaleX(0.925);transform-origin:left 0;">Xác thực</div>
<div class="t" style="left:395.8px;top:436.23px;font-size:14px;line-height:16.8px;font-weight:normal;color:#111;transform:scaleX(0.925);transform-origin:left 0;">00000138</div>
<div class="t" style="left:501.5px;width:90px;text-align:center;top:436.23px;font-size:14px;line-height:16.8px;font-weight:normal;color:#111;transform:scaleX(0.925);transform-origin:center 0;letter-spacing:0.3px">08/06/2023</div>
<div class="t" style="left:598.3px;top:436.23px;font-size:14px;line-height:16.8px;font-weight:normal;color:#111;transform:scaleX(0.925);transform-origin:left 0;">00000138</div>
<div class="t" style="left:710.3px;top:436.23px;font-size:14px;line-height:16.8px;font-weight:normal;color:#111;transform:scaleX(0.925);transform-origin:left 0;letter-spacing:-0.5px">CEE</div>
<div class="t" style="left:822.8px;top:436.23px;font-size:14px;line-height:16.8px;font-weight:normal;color:#111;transform:scaleX(0.925);transform-origin:left 0;letter-spacing:-0.2px">CÔNG TY TNHH COEN-BIO</div>
<div class="t" style="left:1104.8px;top:436.23px;font-size:14px;line-height:16.8px;font-weight:normal;color:#111;transform:scaleX(0.925);transform-origin:left 0;letter-spacing:-0.12px">Bán hàng cho CÔNG TY TNHH COEN-BIO.</div>
<div class="t" style="left:1385.8px;top:436.23px;font-size:14px;line-height:16.8px;font-weight:normal;color:#111;transform:scaleX(0.925);transform-origin:left 0;">131111</div>
<div class="t" style="right:27px;top:436.23px;font-size:14px;line-height:16.8px;font-weight:normal;color:#111;text-align:right;transform:scaleX(0.925);transform-origin:right 0;">700 000</div>
<div class="t" style="right:1681.5px;top:466.81px;font-size:14px;line-height:16.8px;font-weight:normal;color:#6b6b6b;text-align:right;transform:scaleX(0.925);transform-origin:right 0;">9</div>
<div class="t" style="left:47px;top:466.81px;font-size:14px;line-height:16.8px;font-weight:normal;color:#111;transform:scaleX(0.925);transform-origin:left 0;letter-spacing:-0.8px">CTY</div>
<svg class="r" style="left:111.8px;top:467.84px" width="16" height="16" viewBox="0 0 16 16"><rect x="0" y="0" width="15.6" height="15.6" rx="2" fill="#8d8d8d"/><path d="M1.9 7.3 L5.6 11 L13.4 3.3" stroke="#fff" stroke-width="2.1" fill="none"/></svg>
<svg class="r" style="left:156.8px;top:467.84px" width="16" height="16" viewBox="0 0 16 16"><rect x="0" y="0" width="15.6" height="15.6" rx="2" fill="#8d8d8d"/><path d="M1.9 7.3 L5.6 11 L13.4 3.3" stroke="#fff" stroke-width="2.1" fill="none"/></svg>
<div class="t" style="left:193.3px;top:466.81px;font-size:14px;line-height:16.8px;font-weight:normal;color:#111;transform:scaleX(0.925);transform-origin:left 0;">Hủy</div>
<div class="t" style="left:294.3px;top:466.81px;font-size:14px;line-height:16.8px;font-weight:normal;color:#111;transform:scaleX(0.925);transform-origin:left 0;">Thay thế</div>
<div class="t" style="left:395.8px;top:466.81px;font-size:14px;line-height:16.8px;font-weight:normal;color:#111;transform:scaleX(0.925);transform-origin:left 0;">00000137</div>
<div class="t" style="left:501.5px;width:90px;text-align:center;top:466.81px;font-size:14px;line-height:16.8px;font-weight:normal;color:#111;transform:scaleX(0.925);transform-origin:center 0;letter-spacing:0.3px">08/06/2023</div>
<div class="t" style="left:598.3px;top:466.81px;font-size:14px;line-height:16.8px;font-weight:normal;color:#111;transform:scaleX(0.925);transform-origin:left 0;">00000137</div>
<div class="t" style="left:710.3px;top:466.81px;font-size:14px;line-height:16.8px;font-weight:normal;color:#111;transform:scaleX(0.925);transform-origin:left 0;letter-spacing:-0.5px">CEE</div>
<div class="t" style="left:822.8px;top:466.81px;font-size:14px;line-height:16.8px;font-weight:normal;color:#111;transform:scaleX(0.925);transform-origin:left 0;letter-spacing:-0.2px">CÔNG TY TNHH COEN-BIO</div>
<div class="t" style="left:1104.8px;top:466.81px;font-size:14px;line-height:16.8px;font-weight:normal;color:#111;transform:scaleX(0.925);transform-origin:left 0;letter-spacing:-0.12px">Bán hàng cho CÔNG TY TNHH COEN-BIO.</div>
<div class="t" style="left:1385.8px;top:466.81px;font-size:14px;line-height:16.8px;font-weight:normal;color:#111;transform:scaleX(0.925);transform-origin:left 0;">131111</div>
<div class="t" style="right:27px;top:466.81px;font-size:14px;line-height:16.8px;font-weight:normal;color:#111;text-align:right;transform:scaleX(0.925);transform-origin:right 0;">700 000</div>
<div class="t" style="right:1681.5px;top:497.39px;font-size:14px;line-height:16.8px;font-weight:normal;color:#6b6b6b;text-align:right;transform:scaleX(0.925);transform-origin:right 0;">10</div>
<div class="t" style="left:47px;top:497.39px;font-size:14px;line-height:16.8px;font-weight:normal;color:#111;transform:scaleX(0.925);transform-origin:left 0;letter-spacing:-0.8px">CTY</div>
<svg class="r" style="left:111.8px;top:498.41999999999996px" width="16" height="16" viewBox="0 0 16 16"><rect x="0" y="0" width="15.6" height="15.6" rx="2" fill="#8d8d8d"/><path d="M1.9 7.3 L5.6 11 L13.4 3.3" stroke="#fff" stroke-width="2.1" fill="none"/></svg>
<svg class="r" style="left:156.8px;top:498.41999999999996px" width="16" height="16" viewBox="0 0 16 16"><rect x="0" y="0" width="15.6" height="15.6" rx="2" fill="#8d8d8d"/><path d="M1.9 7.3 L5.6 11 L13.4 3.3" stroke="#fff" stroke-width="2.1" fill="none"/></svg>
<div class="t" style="left:193.3px;top:497.39px;font-size:14px;line-height:16.8px;font-weight:normal;color:#111;transform:scaleX(0.925);transform-origin:left 0;">Xuất hóa đơn</div>
<div class="t" style="left:294.3px;top:497.39px;font-size:14px;line-height:16.8px;font-weight:normal;color:#111;transform:scaleX(0.925);transform-origin:left 0;">Xác thực</div>
<div class="t" style="left:395.8px;top:497.39px;font-size:14px;line-height:16.8px;font-weight:normal;color:#111;transform:scaleX(0.925);transform-origin:left 0;">00000136</div>
<div class="t" style="left:501.5px;width:90px;text-align:center;top:497.39px;font-size:14px;line-height:16.8px;font-weight:normal;color:#111;transform:scaleX(0.925);transform-origin:center 0;letter-spacing:0.3px">08/06/2023</div>
<div class="t" style="left:598.3px;top:497.39px;font-size:14px;line-height:16.8px;font-weight:normal;color:#111;transform:scaleX(0.925);transform-origin:left 0;">00000136</div>
<div class="t" style="left:710.3px;top:497.39px;font-size:14px;line-height:16.8px;font-weight:normal;color:#111;transform:scaleX(0.925);transform-origin:left 0;letter-spacing:-0.5px">CEE</div>
<div class="t" style="left:822.8px;top:497.39px;font-size:14px;line-height:16.8px;font-weight:normal;color:#111;transform:scaleX(0.925);transform-origin:left 0;letter-spacing:-0.2px">CÔNG TY TNHH COEN-BIO</div>
<div class="t" style="left:1104.8px;top:497.39px;font-size:14px;line-height:16.8px;font-weight:normal;color:#111;transform:scaleX(0.925);transform-origin:left 0;letter-spacing:-0.12px">Bán hàng cho CÔNG TY TNHH COEN-BIO</div>
<div class="t" style="left:1385.8px;top:497.39px;font-size:14px;line-height:16.8px;font-weight:normal;color:#111;transform:scaleX(0.925);transform-origin:left 0;">131111</div>
<div class="t" style="right:27px;top:497.39px;font-size:14px;line-height:16.8px;font-weight:normal;color:#111;text-align:right;transform:scaleX(0.925);transform-origin:right 0;">700 000</div>
<div class="t" style="right:1681.5px;top:527.97px;font-size:14px;line-height:16.8px;font-weight:normal;color:#6b6b6b;text-align:right;transform:scaleX(0.925);transform-origin:right 0;">11</div>
<div class="t" style="left:47px;top:527.97px;font-size:14px;line-height:16.8px;font-weight:normal;color:#111;transform:scaleX(0.925);transform-origin:left 0;letter-spacing:-0.8px">CTY</div>
<svg class="r" style="left:111.8px;top:529.0px" width="16" height="16" viewBox="0 0 16 16"><rect x="0" y="0" width="15.6" height="15.6" rx="2" fill="#8d8d8d"/><path d="M1.9 7.3 L5.6 11 L13.4 3.3" stroke="#fff" stroke-width="2.1" fill="none"/></svg>
<svg class="r" style="left:156.8px;top:529.0px" width="16" height="16" viewBox="0 0 16 16"><rect x="0" y="0" width="15.6" height="15.6" rx="2" fill="#8d8d8d"/><path d="M1.9 7.3 L5.6 11 L13.4 3.3" stroke="#fff" stroke-width="2.1" fill="none"/></svg>
<div class="t" style="left:193.3px;top:527.97px;font-size:14px;line-height:16.8px;font-weight:normal;color:#111;transform:scaleX(0.925);transform-origin:left 0;">Xuất hóa đơn</div>
<div class="t" style="left:294.3px;top:527.97px;font-size:14px;line-height:16.8px;font-weight:normal;color:#111;transform:scaleX(0.925);transform-origin:left 0;">Điều chỉnh</div>
<div class="t" style="left:395.8px;top:527.97px;font-size:14px;line-height:16.8px;font-weight:normal;color:#111;transform:scaleX(0.925);transform-origin:left 0;">00000135</div>
<div class="t" style="left:501.5px;width:90px;text-align:center;top:527.97px;font-size:14px;line-height:16.8px;font-weight:normal;color:#111;transform:scaleX(0.925);transform-origin:center 0;letter-spacing:0.3px">08/06/2023</div>
<div class="t" style="left:598.3px;top:527.97px;font-size:14px;line-height:16.8px;font-weight:normal;color:#111;transform:scaleX(0.925);transform-origin:left 0;">00000135</div>
<div class="t" style="left:710.3px;top:527.97px;font-size:14px;line-height:16.8px;font-weight:normal;color:#111;transform:scaleX(0.925);transform-origin:left 0;letter-spacing:-0.5px">CEE</div>
<div class="t" style="left:822.8px;top:527.97px;font-size:14px;line-height:16.8px;font-weight:normal;color:#111;transform:scaleX(0.925);transform-origin:left 0;letter-spacing:-0.2px">CÔNG TY TNHH COEN-BIO</div>
<div class="t" style="left:1104.8px;top:527.97px;font-size:14px;line-height:16.8px;font-weight:normal;color:#111;transform:scaleX(0.925);transform-origin:left 0;letter-spacing:-0.12px">Bán hàng cho CÔNG TY TNHH COEN-BIO</div>
<div class="t" style="left:1385.8px;top:527.97px;font-size:14px;line-height:16.8px;font-weight:normal;color:#111;transform:scaleX(0.925);transform-origin:left 0;">131111</div>
<div class="t" style="right:27px;top:527.97px;font-size:14px;line-height:16.8px;font-weight:normal;color:#111;text-align:right;transform:scaleX(0.925);transform-origin:right 0;">700 000</div>
<div class="r" style="left:0px;top:655px;width:1715px;height:21px;background:#f1f1f1;"></div>
<div class="r" style="left:0px;top:676px;width:1715px;height:1px;background:#dedede;"></div>
<div class="r" style="left:21px;top:657px;width:1297px;height:17px;background:#c1c1c1;"></div>
<svg class="r" style="left:7px;top:660px;" width="7" height="11" viewBox="0 0 7 11"><path d="M6.5 0.8 L0.6 5.3 L6.5 9.8 Z" fill="#a3a3a3"/></svg>
<svg class="r" style="left:1701px;top:660px;" width="7" height="11" viewBox="0 0 7 11"><path d="M0.5 0.8 L6.4 5.3 L0.5 9.8 Z" fill="#505050"/></svg>
<svg class="r" style="left:4px;top:680px;" width="32" height="28" viewBox="0 0 32 28">
<defs><linearGradient id="xg" x1="0" y1="0" x2="0" y2="1"><stop offset="0" stop-color="#6cb255"/><stop offset="1" stop-color="#3d8a2c"/></linearGradient></defs>
<path d="M7.6 5.4 L18.4 5.4 L22.3 9.3 L22.3 22.3 L7.6 22.3 Z" fill="#fbfbfb" stroke="#c6c6c6" stroke-width="1"/>
<path d="M18.4 5.4 L18.4 9.3 L22.3 9.3" fill="#eeeeee" stroke="#d0d0d0" stroke-width="0.8"/>
<rect x="5.4" y="8.2" width="10.4" height="11.3" fill="url(#xg)" stroke="#3f8a30" stroke-width="0.8"/>
<rect x="6.3" y="9.2" width="8.6" height="1.5" fill="#b3dba2"/>
<rect x="6.3" y="17.1" width="8.6" height="1.5" fill="#a9d597"/>
<path d="M6 12 L8.2 13.9 L6 15.8 Z" fill="#fff"/>
<path d="M15.2 12 L13 13.9 L15.2 15.8 Z" fill="#fff"/>
<path d="M8 12.2 C10 12.8 11.5 14.2 13.2 15.6" stroke="#8fd07a" stroke-width="1.2" fill="none"/>
<path d="M8 15.6 C9.5 14.5 10.5 13.6 12 12.6" stroke="#2f7a22" stroke-width="1" fill="none"/>
</svg>
<div class="t" style="left:34px;top:686.08px;font-size:15.5px;line-height:18.6px;font-weight:normal;color:#1b8ad0;transform:scaleX(0.96);transform-origin:left 0;">Kết xuất dữ liệu</div>
<svg class="r" style="left:148px;top:680px;" width="32" height="28" viewBox="0 0 32 28">
<rect x="12.3" y="6.6" width="9" height="5.7" rx="1.3" fill="#e6f1fa" stroke="#5b98d4" stroke-width="1.1"/>
<rect x="6.6" y="14.5" width="14.7" height="5.8" rx="1.3" fill="#cfe4f6" stroke="#3f7ec6" stroke-width="1.2"/>
<rect x="22.9" y="5.1" width="1.1" height="17" fill="#4a4a4a"/>
</svg>
<div class="t" style="left:179.5px;top:686.08px;font-size:15.5px;line-height:18.6px;font-weight:normal;color:#1b8ad0;transform:scaleX(0.96);transform-origin:left 0;">Cố định cột</div>
<div class="r" style="left:0px;top:711px;width:1715px;height:1px;background:#dddddd;"></div>
<div class="r" style="left:41px;top:712px;width:1674px;height:38px;background:#f2f2f2;"></div>
<div class="r" style="left:40px;top:750px;width:1675px;height:1px;background:#dddddd;"></div>
<div class="r" style="left:41px;top:751px;width:1674px;height:30px;background:#f9f9f9;"></div>
<div class="r" style="left:0px;top:781px;width:1715px;height:1px;background:#dddddd;"></div>
<div class="r" style="left:40px;top:711px;width:1px;height:70px;background:#dddddd;"></div>
<div class="r" style="left:153px;top:711px;width:1px;height:70px;background:#dddddd;"></div>
<div class="r" style="left:434px;top:711px;width:1px;height:70px;background:#dddddd;"></div>
<div class="r" style="left:501px;top:711px;width:1px;height:70px;background:#dddddd;"></div>
<div class="r" style="left:614px;top:711px;width:1px;height:70px;background:#dddddd;"></div>
<div class="r" style="left:726px;top:711px;width:1px;height:70px;background:#dddddd;"></div>
<div class="r" style="left:839px;top:711px;width:1px;height:70px;background:#dddddd;"></div>
<div class="r" style="left:951px;top:711px;width:1px;height:70px;background:#dddddd;"></div>
<div class="r" style="left:1064px;top:711px;width:1px;height:70px;background:#dddddd;"></div>
<div class="r" style="left:1176px;top:711px;width:1px;height:70px;background:#dddddd;"></div>
<div class="r" style="left:1289px;top:711px;width:1px;height:70px;background:#dddddd;"></div>
<div class="r" style="left:1401px;top:711px;width:1px;height:70px;background:#dddddd;"></div>
<div class="r" style="left:1514px;top:711px;width:1px;height:70px;background:#dddddd;"></div>
<div class="r" style="left:1626px;top:711px;width:1px;height:70px;background:#dddddd;"></div>
<div class="t" style="left:16.5px;width:160px;text-align:center;top:724.17px;font-size:14px;line-height:16.8px;font-weight:normal;color:#1a1a1a;transform:scaleX(0.965);transform-origin:center 0;-webkit-text-stroke:0.2px #1a1a1a;">Mã sản phẩm</div>
<div class="t" style="left:213.5px;width:160px;text-align:center;top:724.17px;font-size:14px;line-height:16.8px;font-weight:normal;color:#1a1a1a;transform:scaleX(0.965);transform-origin:center 0;-webkit-text-stroke:0.2px #1a1a1a;">Tên sản phẩm</div>
<div class="t" style="left:387.5px;width:160px;text-align:center;top:724.17px;font-size:14px;line-height:16.8px;font-weight:normal;color:#1a1a1a;transform:scaleX(0.965);transform-origin:center 0;-webkit-text-stroke:0.2px #1a1a1a;">Đvt</div>
<div class="t" style="left:477.5px;width:160px;text-align:center;top:724.17px;font-size:14px;line-height:16.8px;font-weight:normal;color:#1a1a1a;transform:scaleX(0.965);transform-origin:center 0;-webkit-text-stroke:0.2px #1a1a1a;">Mã kho</div>
<div class="t" style="left:590.0px;width:160px;text-align:center;top:724.17px;font-size:14px;line-height:16.8px;font-weight:normal;color:#1a1a1a;transform:scaleX(0.965);transform-origin:center 0;-webkit-text-stroke:0.2px #1a1a1a;">Mã lô</div>
<div class="t" style="left:702.5px;width:160px;text-align:center;top:724.17px;font-size:14px;line-height:16.8px;font-weight:normal;color:#1a1a1a;transform:scaleX(0.965);transform-origin:center 0;-webkit-text-stroke:0.2px #1a1a1a;">Mã vị trí</div>
<div class="t" style="left:815.0px;width:160px;text-align:center;top:724.17px;font-size:14px;line-height:16.8px;font-weight:normal;color:#1a1a1a;transform:scaleX(0.965);transform-origin:center 0;-webkit-text-stroke:0.2px #1a1a1a;">Tồn</div>
<div class="t" style="left:927.5px;width:160px;text-align:center;top:724.17px;font-size:14px;line-height:16.8px;font-weight:normal;color:#1a1a1a;transform:scaleX(0.965);transform-origin:center 0;-webkit-text-stroke:0.2px #1a1a1a;">Loại hàng</div>
<div class="t" style="left:1040.0px;width:160px;text-align:center;top:724.17px;font-size:14px;line-height:16.8px;font-weight:normal;color:#1a1a1a;transform:scaleX(0.965);transform-origin:center 0;-webkit-text-stroke:0.2px #1a1a1a;">Số lượng</div>
<div class="t" style="left:1152.5px;width:160px;text-align:center;top:724.17px;font-size:14px;line-height:16.8px;font-weight:normal;color:#1a1a1a;transform:scaleX(0.965);transform-origin:center 0;-webkit-text-stroke:0.2px #1a1a1a;">Giá chuẩn VND</div>
<div class="t" style="left:1265.0px;width:160px;text-align:center;top:724.17px;font-size:14px;line-height:16.8px;font-weight:normal;color:#1a1a1a;transform:scaleX(0.965);transform-origin:center 0;-webkit-text-stroke:0.2px #1a1a1a;">Giá bán VND</div>
<div class="t" style="left:1377.5px;width:160px;text-align:center;top:724.17px;font-size:14px;line-height:16.8px;font-weight:normal;color:#1a1a1a;transform:scaleX(0.965);transform-origin:center 0;-webkit-text-stroke:0.2px #1a1a1a;">Thành tiền VND</div>
<div class="t" style="left:1490.0px;width:160px;text-align:center;top:724.17px;font-size:14px;line-height:16.8px;font-weight:normal;color:#1a1a1a;transform:scaleX(0.965);transform-origin:center 0;-webkit-text-stroke:0.2px #1a1a1a;">Đích danh</div>
<div class="r" style="left:1627px;top:712px;width:88px;height:38px;overflow:hidden">
<div class="t" style="left:17.5px;top:12.17px;font-size:14px;line-height:16.8px;font-weight:normal;color:#1a1a1a;transform:scaleX(0.965);transform-origin:left 0;-webkit-text-stroke:0.2px #1a1a1a;">Giá tồn VND</div>
</div>
<div class="t" style="right:1682.2px;top:758.67px;font-size:14px;line-height:16.8px;font-weight:normal;color:#6b6b6b;text-align:right;transform:scaleX(0.925);transform-origin:right 0;">1</div>
<div class="t" style="left:46.5px;top:758.67px;font-size:14px;line-height:16.8px;font-weight:normal;color:#111;transform:scaleX(0.925);transform-origin:left 0;">0146-1</div>
<div class="t" style="left:158.5px;top:758.67px;font-size:14px;line-height:16.8px;font-weight:normal;color:#111;transform:scaleX(0.925);transform-origin:left 0;">20S34ĐSN 0146 - Trắng hoa</div>
<div class="t" style="left:439.5px;top:758.67px;font-size:14px;line-height:16.8px;font-weight:normal;color:#111;transform:scaleX(0.925);transform-origin:left 0;">Chiếc</div>
<div class="t" style="left:507.5px;top:758.67px;font-size:14px;line-height:16.8px;font-weight:normal;color:#111;transform:scaleX(0.925);transform-origin:left 0;">KTP</div>
<div class="t" style="left:957px;top:758.67px;font-size:14px;line-height:16.8px;font-weight:normal;color:#111;transform:scaleX(0.925);transform-origin:left 0;">0. Hàng bán</div>
<div class="t" style="right:545px;top:758.67px;font-size:14px;line-height:16.8px;font-weight:normal;color:#111;text-align:right;transform:scaleX(0.925);transform-origin:right 0;">2</div>
<div class="t" style="right:320.5px;top:758.67px;font-size:14px;line-height:16.8px;font-weight:normal;color:#111;text-align:right;transform:scaleX(0.925);transform-origin:right 0;">350 000</div>
<div class="t" style="right:207.5px;top:758.67px;font-size:14px;line-height:16.8px;font-weight:normal;color:#111;text-align:right;transform:scaleX(0.925);transform-origin:right 0;">700 000</div>
<div class="r" style="left:1562.5px;top:759px;width:14.5px;height:14.5px;border:1px solid #cfcfcf;border-radius:2px;background:#fcfcfc"></div>
<div class="r" style="left:1627px;top:751px;width:88px;height:30px;overflow:hidden">
<div class="t" style="left:49.5px;top:7.67px;font-size:14px;line-height:16.8px;font-weight:normal;color:#111;transform:scaleX(0.925);transform-origin:left 0;">278 330</div>
</div>
</body></html>
